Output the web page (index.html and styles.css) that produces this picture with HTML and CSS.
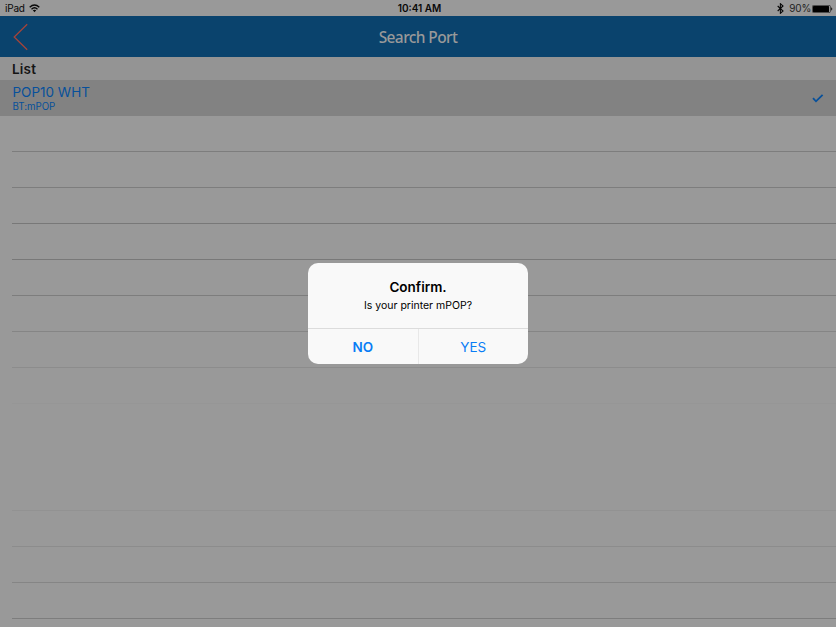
FILE: index.html
```html
<!DOCTYPE html>
<html lang="en">
<head>
<meta charset="utf-8">
<title>Search Port</title>
<link rel="stylesheet" href="styles.css">
</head>
<body>
<div class="screen">
  <header class="status">
    <div class="status-left"><span class="device">iPad</span>
      <svg class="wifi" width="11" height="9" viewBox="0 0 11 9" fill="none" stroke="#080808" stroke-width="1.4"><path d="M.7 3.2Q5.5-1 10.3 3.2M2.5 5.2Q5.5 2.5 8.5 5.2"/><path d="M3.8 6.3Q5.5 5 7.2 6.3L5.5 8.2Z" fill="#080808" stroke="none"/></svg>
    </div>
    <div class="clock">10:41 AM</div>
    <div class="status-right">
      <svg class="bluetooth" width="7" height="11" viewBox="0 0 7 11" fill="none" stroke="#080808" stroke-width="1.1"><path d="M.7 3L6 8L3.4 10.3V.7L6 3L.7 8"/></svg>
      <span class="percent">90%</span>
      <svg class="battery" width="21" height="8" viewBox="0 0 21 8"><rect x=".4" y=".4" width="18" height="7.2" rx="1.2" fill="none" stroke="#222" stroke-width=".7"/><rect x="1" y="1" width="16" height="6" rx=".5" fill="#000"/><path d="M19.2 2.3Q21.4 4 19.2 5.7Z" fill="#111"/></svg>
    </div>
  </header>
  <nav class="navbar">
    <svg class="back" width="16" height="28" viewBox="0 0 16 28" fill="none" stroke="#a5443a" stroke-width="1.3"><path d="M14.2 1.2L1.2 14L14.2 26.8"/></svg>
    <h1>Search Port</h1>
  </nav>
  <h2 class="section">List</h2>
  <div class="port">
    <div><div class="port-name">POP10 WHT</div><div class="port-kind">BT:mPOP</div></div>
    <svg width="12" height="9" viewBox="0 0 12 9" fill="none" stroke="#07509b" stroke-width="1.8"><path d="M1 4.2L4 7.3L10.6 .8"/></svg>
  </div>
  <div class="rows">
    <div class="row mid"></div><div class="row mid"></div><div class="row dark"></div><div class="row dark"></div>
    <div class="row mid"></div><div class="row soft"></div><div class="row light"></div><div class="row faint"></div>
    <div class="row none"></div><div class="row none"></div><div class="row short pale"></div><div class="row light"></div>
    <div class="row soft"></div><div class="row mid"></div>
  </div>
  <div class="overlay">
    <div class="alert" role="alertdialog">
      <div class="message"><div class="alert-title">Confirm.</div><div class="alert-text">Is your printer mPOP?</div></div>
      <div class="actions"><button class="no">NO</button><button class="yes">YES</button></div>
    </div>
  </div>
</div>
</body>
</html>
```

FILE: styles.css
```css
* { box-sizing: border-box; }
body { margin: 0; font-family: Inter, "Liberation Sans", sans-serif; }
h1, h2 { margin: 0; }
svg { display: block; flex: none; }
.screen { position: relative; width: 836px; height: 627px; overflow: hidden; background: #999; }
.status { display: grid; grid-template-columns: 1fr auto 1fr; align-items: center; height: 16px; padding: 0 4px 0 5px; font-size: 10px; line-height: 17px; color: #080808; }
.status-left, .status-right { display: flex; align-items: center; }
.device { letter-spacing: -.2px; margin-right: 4px; }
.clock { font-weight: 600; font-size: 10px; padding-left: 2px; }
.status-right { justify-content: flex-end; }
.bluetooth { margin-right: 5px; }
.percent { margin-right: 1px; color: #222; letter-spacing: -.2px; }
.status-right { margin-right: -1px; }
.navbar { display: grid; grid-template-columns: 1fr auto 1fr; align-items: center; height: 41px; padding: 0 13px; background: #0a436d; }
.navbar h1 { font: 500 15.5px/39px "Noto Sans", sans-serif; letter-spacing: -.6px; padding-top: 2px; color: #999; }
.section { height: 23px; padding-left: 12px; background: #949494; font-size: 13.5px; line-height: 24px; font-weight: 600; letter-spacing: .2px; color: #151515; }
.port { display: flex; align-items: center; justify-content: space-between; height: 36px; padding: 0 12px; background: #828282; color: #07509b; }
.port-name { font-size: 13.5px; line-height: 17px; padding-left: .5px; }
.port-kind { font-size: 9.7px; line-height: 12px; padding-left: .5px; }
.row { height: 36px; margin-left: 12px; border-bottom: 1px solid; }
.short { height: 35px; }
.dark { border-color: #787878; }
.mid { border-color: #7d7d7d; }
.soft { border-color: #858585; }
.light { border-color: #8c8c8c; }
.pale { border-color: #929292; }
.faint { border-color: #969696; }
.none { border-color: transparent; }
.overlay { position: absolute; inset: 0; display: flex; justify-content: center; align-items: center; }
.alert { width: 220px; height: 101px; border-radius: 10px; overflow: hidden; background: #f9f9f9; text-align: center; color: #000; }
.message { height: 66px; padding-top: 16px; border-bottom: 1px solid #dcdcdc; }
.alert-title { font-size: 13.5px; line-height: 17px; font-weight: 600; }
.alert-text { font-size: 10.5px; line-height: 19px; }
.actions { display: flex; height: 35px; }
.actions button { flex: 1; border: 0; padding: 0; background: none; font-family: inherit; font-size: 13.5px; color: #097df5; }
.actions .no { font-weight: 600; border-right: 1px solid #e8e8e8; }
```
